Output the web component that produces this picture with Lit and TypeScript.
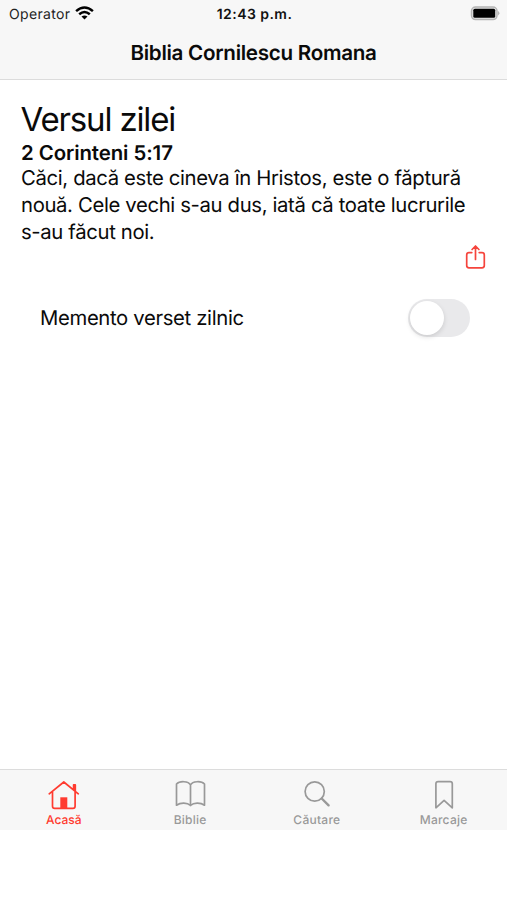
import { LitElement, html, css, svg } from "lit";
import { customElement, property } from "lit/decorators.js";
import { classMap } from "lit/directives/class-map.js";

const icons = {
  home: svg`<path d="M2.200 13.800 16.800 2 31.300 13.800M5.500 12v14.200q0 2.200 2.200 2.200h18.200q2.200 0 2.200-2.200V12M26.600 9.400V4.900h1.700v6" /><path d="M13.300 17.300h7v11h-7z" fill="currentColor" stroke="none" />`,
  book: svg`<path d="M16.500 5C14.500 .8 5.500 .8 2.500 4V25.200C6.500 22.500 13.300 22.500 16.500 25.500C19.700 22.500 26.500 22.500 30.500 25.200V4C27.500 .8 18.500 .8 16.500 5ZM16.500 5V25.500" />`,
  search: svg`<circle cx="13.700" cy="11.500" r="9.600" /><path d="M20.700 18.500 27.600 25.300" stroke-width="2.400" />`,
  bookmark: svg`<path d="M7.900 27.800V3.800q0-2.200 2.200-2.200h12q2.200 0 2.200 2.200V27.800L16.100 20.300Z" />`,
};

const tabs = [
  { icon: icons.home, label: "Acasă", active: true },
  { icon: icons.book, label: "Biblie", active: false },
  { icon: icons.search, label: "Căutare", active: false },
  { icon: icons.bookmark, label: "Marcaje", active: false },
];

@customElement("status-bar")
class StatusBar extends LitElement {
  static styles = css`
    :host { display: grid; grid-template-columns: 1fr auto 1fr; align-items: center; height: 27px; padding: 0 7px 0 9px; }
    .carrier { display: flex; align-items: center; gap: 5px; font-size: 14px; letter-spacing: 0.35px; color: #222; }
    .carrier span { padding-top: 2px; }
    .wifi { width: 19px; height: 14px; margin-bottom: 1px; }
    .time { font-size: 14px; font-weight: 600; letter-spacing: 0.45px; color: #111; padding-top: 2px; }
    .battery { width: 31px; height: 15px; justify-self: end; }
  `;
  render() {
    return html`
      <div class="carrier"><span>Operator</span>
        <svg class="wifi" viewBox="0 0 19 14" fill="none" stroke="#000" stroke-width="2.500">
          <path d="M1.100 5.100Q9.500-2.200 17.900 5.100M4.200 8.300Q9.500 3.800 14.800 8.300" />
          <path d="M9.500 13.500 6.500 10.600Q9.500 8.300 12.500 10.600Z" fill="#000" stroke="none" />
        </svg>
      </div>
      <div class="time">12:43 p.m.</div>
      <svg class="battery" viewBox="0 0 31 15">
        <rect x="2.500" y="1" width="25.500" height="12.600" rx="4" fill="#e4e4e4" stroke="#b4b4b4" stroke-width="1.500" />
        <rect x="4.300" y="2.800" width="21.900" height="9" rx="1.500" />
        <path d="M29.300 5.100q2 2.200 0 4.400z" fill="#999" />
      </svg>`;
  }
}

@customElement("toggle-switch")
class ToggleSwitch extends LitElement {
  static styles = css`
    :host { display: flex; box-sizing: border-box; width: 62px; height: 38px; padding: 2px; border-radius: 19px; background: #e9e9eb; }
    .knob { width: 34px; height: 34px; border-radius: 50%; background: #fff; box-shadow: 0 2px 5px rgba(0, 0, 0, 0.13); }
  `;
  render() {
    return html`<div class="knob"></div>`;
  }
}

@customElement("tab-item")
class TabItem extends LitElement {
  @property({ type: Object }) tab: any = tabs[0];
  static styles = css`
    :host { flex: 1; }
    .tab { display: flex; flex-direction: column; align-items: center; padding-top: 10px; color: #999; }
    .active { color: #ff3b30; }
    .icon { width: 32px; height: 32px; fill: none; stroke: currentColor; stroke-width: 1.700; stroke-linejoin: round; stroke-linecap: round; overflow: visible; }
    .label { font-size: 12px; line-height: 16px; font-weight: 500; letter-spacing: 0.250px; }
    .active .label { letter-spacing: 0; padding-left: 1px; }
  `;
  render() {
    return html`<div class=${classMap({ tab: true, active: this.tab.active })}>
      <svg class="icon" viewBox="0 0 32 32">${this.tab.icon}</svg>
      <div class="label">${this.tab.label}</div>
    </div>`;
  }
}

@customElement("app-root")
class AppRoot extends LitElement {
  static styles = css`
    :host { display: flex; flex-direction: column; height: 900px; background: #fff; color: #0a0a0a; font-family: Inter, "Liberation Sans", sans-serif; white-space: nowrap; text-rendering: geometricPrecision; }
    .header { box-sizing: border-box; height: 80px; background: #f7f7f7; border-bottom: 1px solid #dcdcdc; }
    .title { text-align: center; font-size: 20.600px; font-weight: 600; line-height: 52px; letter-spacing: -0.280px; }
    .verse { display: flex; flex-direction: column; padding: 19px 21px 0; }
    .heading { font-size: 33px; line-height: 41px; letter-spacing: -1.150px; margin-left: -0.5px; }
    .reference { font-size: 20.400px; line-height: 26px; font-weight: 600; letter-spacing: -0.080px; }
    .text { font-size: 20.300px; line-height: 27px; letter-spacing: -0.350px; margin-top: -2px; }
    .line { display: block; }
    .share { width: 22px; height: 26px; margin-top: -1px; align-self: flex-end; fill: none; stroke: #f5443c; stroke-width: 1.700; stroke-linecap: round; stroke-linejoin: round; }
    .reminder { display: flex; justify-content: space-between; align-items: center; padding: 29px 37px 0 40px; }
    .reminder-label { font-size: 20.300px; letter-spacing: -0.340px; padding-bottom: 2px; }
    .tabs { display: flex; box-sizing: border-box; height: 61px; margin-top: auto; margin-bottom: 70px; background: #f7f7f7; border-top: 1px solid #dcdcdc; }
  `;
  render() {
    return html`
      <div class="header">
        <status-bar></status-bar>
        <div class="title">Biblia Cornilescu Romana</div>
      </div>
      <div class="verse">
        <div class="heading">Versul zilei</div>
        <div class="reference">2 Corinteni 5:17</div>
        <div class="text">
          <span class="line">Căci, dacă este cineva în Hristos, este o făptură</span>
          <span class="line">nouă. Cele vechi s-au dus, iată că toate lucrurile</span>
          <span class="line">s-au făcut noi.</span>
        </div>
        <svg class="share" viewBox="0 0 22 26">
          <path d="M7.800 8.600H5q-2.300 0-2.300 2.300v10.600q0 2.300 2.300 2.300h13q2.300 0 2.300-2.300V10.900q0-2.300-2.300-2.300h-2.800M11.500 15.500V2.300M8.100 5.500 11.500 2l3.400 3.500" />
        </svg>
      </div>
      <div class="reminder">
        <div class="reminder-label">Memento verset zilnic</div>
        <toggle-switch></toggle-switch>
      </div>
      <div class="tabs">${tabs.map((t) => html`<tab-item .tab=${t}></tab-item>`)}</div>`;
  }
}
